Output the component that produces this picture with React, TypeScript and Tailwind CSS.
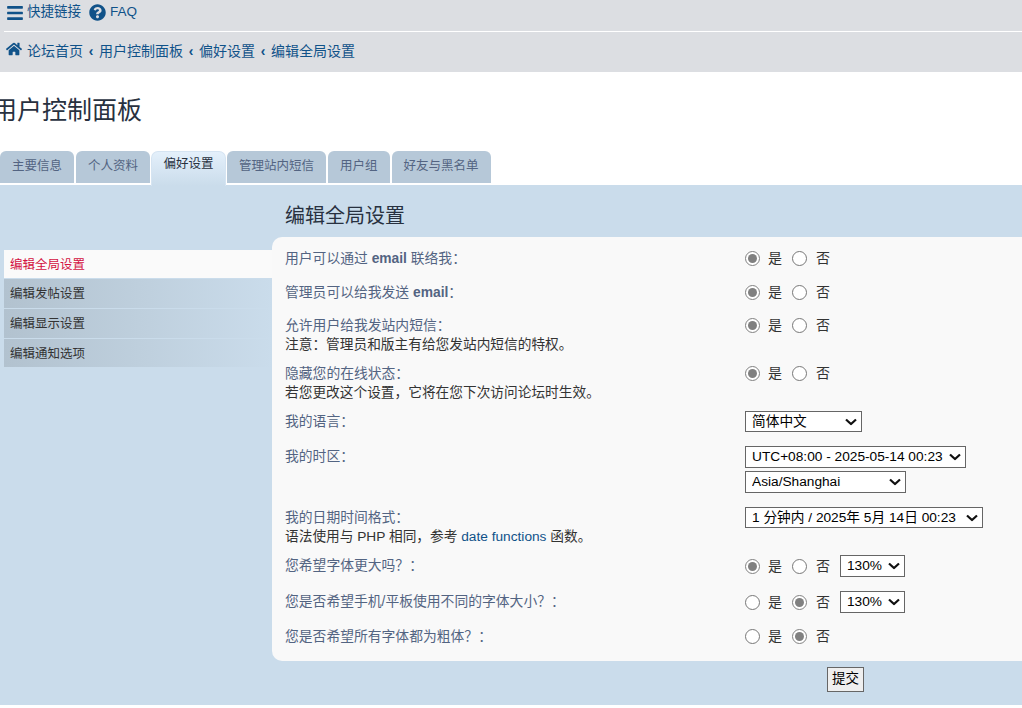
import { FaBars, FaHome, FaQuestionCircle } from 'react-icons/fa'

const tabs = ['主要信息', '个人资料', '偏好设置', '管理站内短信', '用户组', '好友与黑名单']
const crumbs = ['论坛首页', '用户控制面板', '偏好设置', '编辑全局设置']

// full-width punctuation
const colon = '\uFF1A'
const comma = '\uFF0C'
const ask = '\uFF1F'

function YesNo({ name, value }: { name: string; value: 'yes' | 'no' }) {
  return (
    <span className="mt-[1px] flex items-center text-[14px] leading-[19px] text-[#333]">
      <input type="radio" name={name} defaultChecked={value === 'yes'} className="m-0 h-[15px] w-[15px] accent-[#808080]" />
      <span className="ml-[8px] w-[24px]">是</span>
      <input type="radio" name={name} defaultChecked={value === 'no'} className="m-0 h-[15px] w-[15px] accent-[#808080]" />
      <span className="ml-[9px] w-[24px]">否</span>
    </span>
  )
}

function Pick({ option, className }: { option: string; className: string }) {
  return (
    <div className={`relative ${className}`}>
      <select className="block h-full w-full appearance-none border border-[#666] bg-white pl-[6px] text-[13.7px] text-black">
        <option>{option}</option>
      </select>
      <svg viewBox="0 0 12 7" className="pointer-events-none absolute right-[5px] top-1/2 h-[7px] w-[12px] -translate-y-1/2" fill="none" stroke="#111" strokeWidth="2.2">
        <path d="M1 1l5 4.5L11 1" />
      </svg>
    </div>
  )
}

function Row({ height, label, note, children }: { height: string; label: React.ReactNode; note?: React.ReactNode; children: React.ReactNode }) {
  return (
    <div className={`flex ${height}`}>
      <div className="w-[460px] pt-[1px] text-[13.8px] leading-[19px] text-[#536482]">
        <div>{label}</div>
        {note ? <div className="text-[13.7px] text-[#333]">{note}</div> : null}
      </div>
      <div>{children}</div>
    </div>
  )
}

export default function App() {
  return (
    <div className="h-[708px] overflow-hidden bg-white font-['Liberation_Sans','Noto_Sans_CJK_SC',sans-serif]">
      <div className="h-[72px] bg-[#dcdee2] text-[#105289]">
        <div className="ml-[4px] flex h-[32px] items-center border-b border-white pb-[6px] text-[13.5px]">
          <FaBars className="ml-[2px] mr-[3px] h-[18px] w-[18px]" />
          <span>快捷链接</span>
          <FaQuestionCircle className="ml-[8px] mr-[4px] h-[17px] w-[17px]" />
          <span>FAQ</span>
        </div>
        <div className="flex h-[38px] items-center pl-[6px] text-[14px]">
          <FaHome className="mr-[5px] mt-[-4px] h-[16px] w-[16px]" />
          {crumbs.map((c, i) => (
            <span key={c} className="flex items-center">
              {i > 0 ? <span className="mx-[5.5px] w-[5px] text-center font-bold">‹</span> : null}
              {c}
            </span>
          ))}
        </div>
      </div>

      <h1 className="ml-[-8px] mt-[21px] text-[25px] leading-[35px] font-normal text-[#28313f]">用户控制面板</h1>

      <div className="mt-[23px] flex h-[34px] items-start gap-[2px] border-b-2 border-white">
        {tabs.map((t) => (
          <div
            key={t}
            className={
              t === '偏好设置'
                ? 'relative -mx-[1px] flex h-[35px] items-start rounded-t-[7px] border border-b-0 border-[#d5e4f2] bg-gradient-to-b from-[#e4f0fb] to-[#cadceb] px-[11.5px] pt-[3px] text-[12.5px] leading-[19px] text-[#28313f]'
                : 'flex h-[32px] items-start rounded-t-[6px] bg-[#b6c8d8] px-[12px] pt-[6px] text-[12.5px] leading-[19px] text-[#536482]'
            }
          >
            {t}
          </div>
        ))}
      </div>

      <div className="h-[520px] bg-[#cadceb]">
        <div className="flex">
          <div className="w-[272px] shrink-0 pl-[4px] pt-[65px] text-[12.5px] leading-[19px]">
            <div className="mb-[1px] flex h-[28px] items-center bg-[#fafafa] pl-[6px] pt-[2px] text-[#d31141]">编辑全局设置</div>
            <div className="mb-[1px] flex h-[29px] items-center bg-gradient-to-r from-[#b2c2cf] to-[#cadceb] pl-[6px] pt-[2px] text-[#333]">编辑发帖设置</div>
            <div className="mb-[1px] flex h-[29px] items-center bg-gradient-to-r from-[#b2c2cf] to-[#cadceb] pl-[6px] pt-[2px] text-[#333]">编辑显示设置</div>
            <div className="flex h-[28px] items-center bg-gradient-to-r from-[#b2c2cf] to-[#cadceb] pl-[6px] pt-[2px] text-[#333]">编辑通知选项</div>
          </div>
          <div className="min-w-0 flex-1">
            <h2 className="ml-[13px] h-[52px] pt-[17px] text-[20px] leading-[28px] font-normal text-[#28313f]">编辑全局设置</h2>
            <div className="h-[424px] rounded-l-[10px] bg-[#f9f9f9] pl-[13px] pt-[11px]">
              <Row height="h-[34px]" label={<>用户可以通过 <b>email</b> 联络我{colon}</>}>
                <YesNo name="a" value="yes" />
              </Row>
              <Row height="h-[33px]" label={<>管理员可以给我发送 <b>email</b>{colon}</>}>
                <YesNo name="b" value="yes" />
              </Row>
              <Row height="h-[48px]" label={`允许用户给我发站内短信${colon}`} note={`注意${colon}管理员和版主有给您发站内短信的特权。`}>
                <YesNo name="c" value="yes" />
              </Row>
              <Row height="h-[48px]" label={`隐藏您的在线状态${colon}`} note={`若您更改这个设置${comma}它将在您下次访问论坛时生效。`}>
                <YesNo name="d" value="yes" />
              </Row>
              <Row height="h-[35px]" label={`我的语言${colon}`}>
                <Pick option="简体中文" className="h-[21px] w-[117px]" />
              </Row>
              <Row height="h-[61px]" label={`我的时区${colon}`}>
                <Pick option="UTC+08:00 - 2025-05-14 00:23" className="h-[22px] w-[221px]" />
                <Pick option="Asia/Shanghai" className="mt-[3px] h-[22px] w-[161px]" />
              </Row>
              <Row
                height="h-[48px]"
                label={`我的日期时间格式${colon}`}
                note={<>语法使用与 PHP 相同{comma}参考 <span className="text-[#105289]">date functions</span> 函数。</>}
              >
                <Pick option="1 分钟内 / 2025年 5月 14日 00:23" className="h-[21px] w-[238px]" />
              </Row>
              <Row height="h-[36px]" label={`您希望字体更大吗${ask}${colon}`}>
                <div className="flex items-center">
                  <YesNo name="e" value="yes" />
                  <Pick option="130%" className="h-[22px] w-[65px]" />
                </div>
              </Row>
              <Row height="h-[35px]" label={`您是否希望手机/平板使用不同的字体大小${ask}${colon}`}>
                <div className="flex items-center">
                  <YesNo name="f" value="no" />
                  <Pick option="130%" className="h-[22px] w-[65px]" />
                </div>
              </Row>
              <Row height="h-[24px]" label={`您是否希望所有字体都为粗体${ask}${colon}`}>
                <YesNo name="g" value="no" />
              </Row>
            </div>
            <div className="mt-[5px] pl-[555px]">
              <button className="h-[25px] w-[37px] border border-[#666] bg-[#efefef] text-[13.5px] text-black">提交</button>
            </div>
          </div>
        </div>
      </div>
    </div>
  )
}
